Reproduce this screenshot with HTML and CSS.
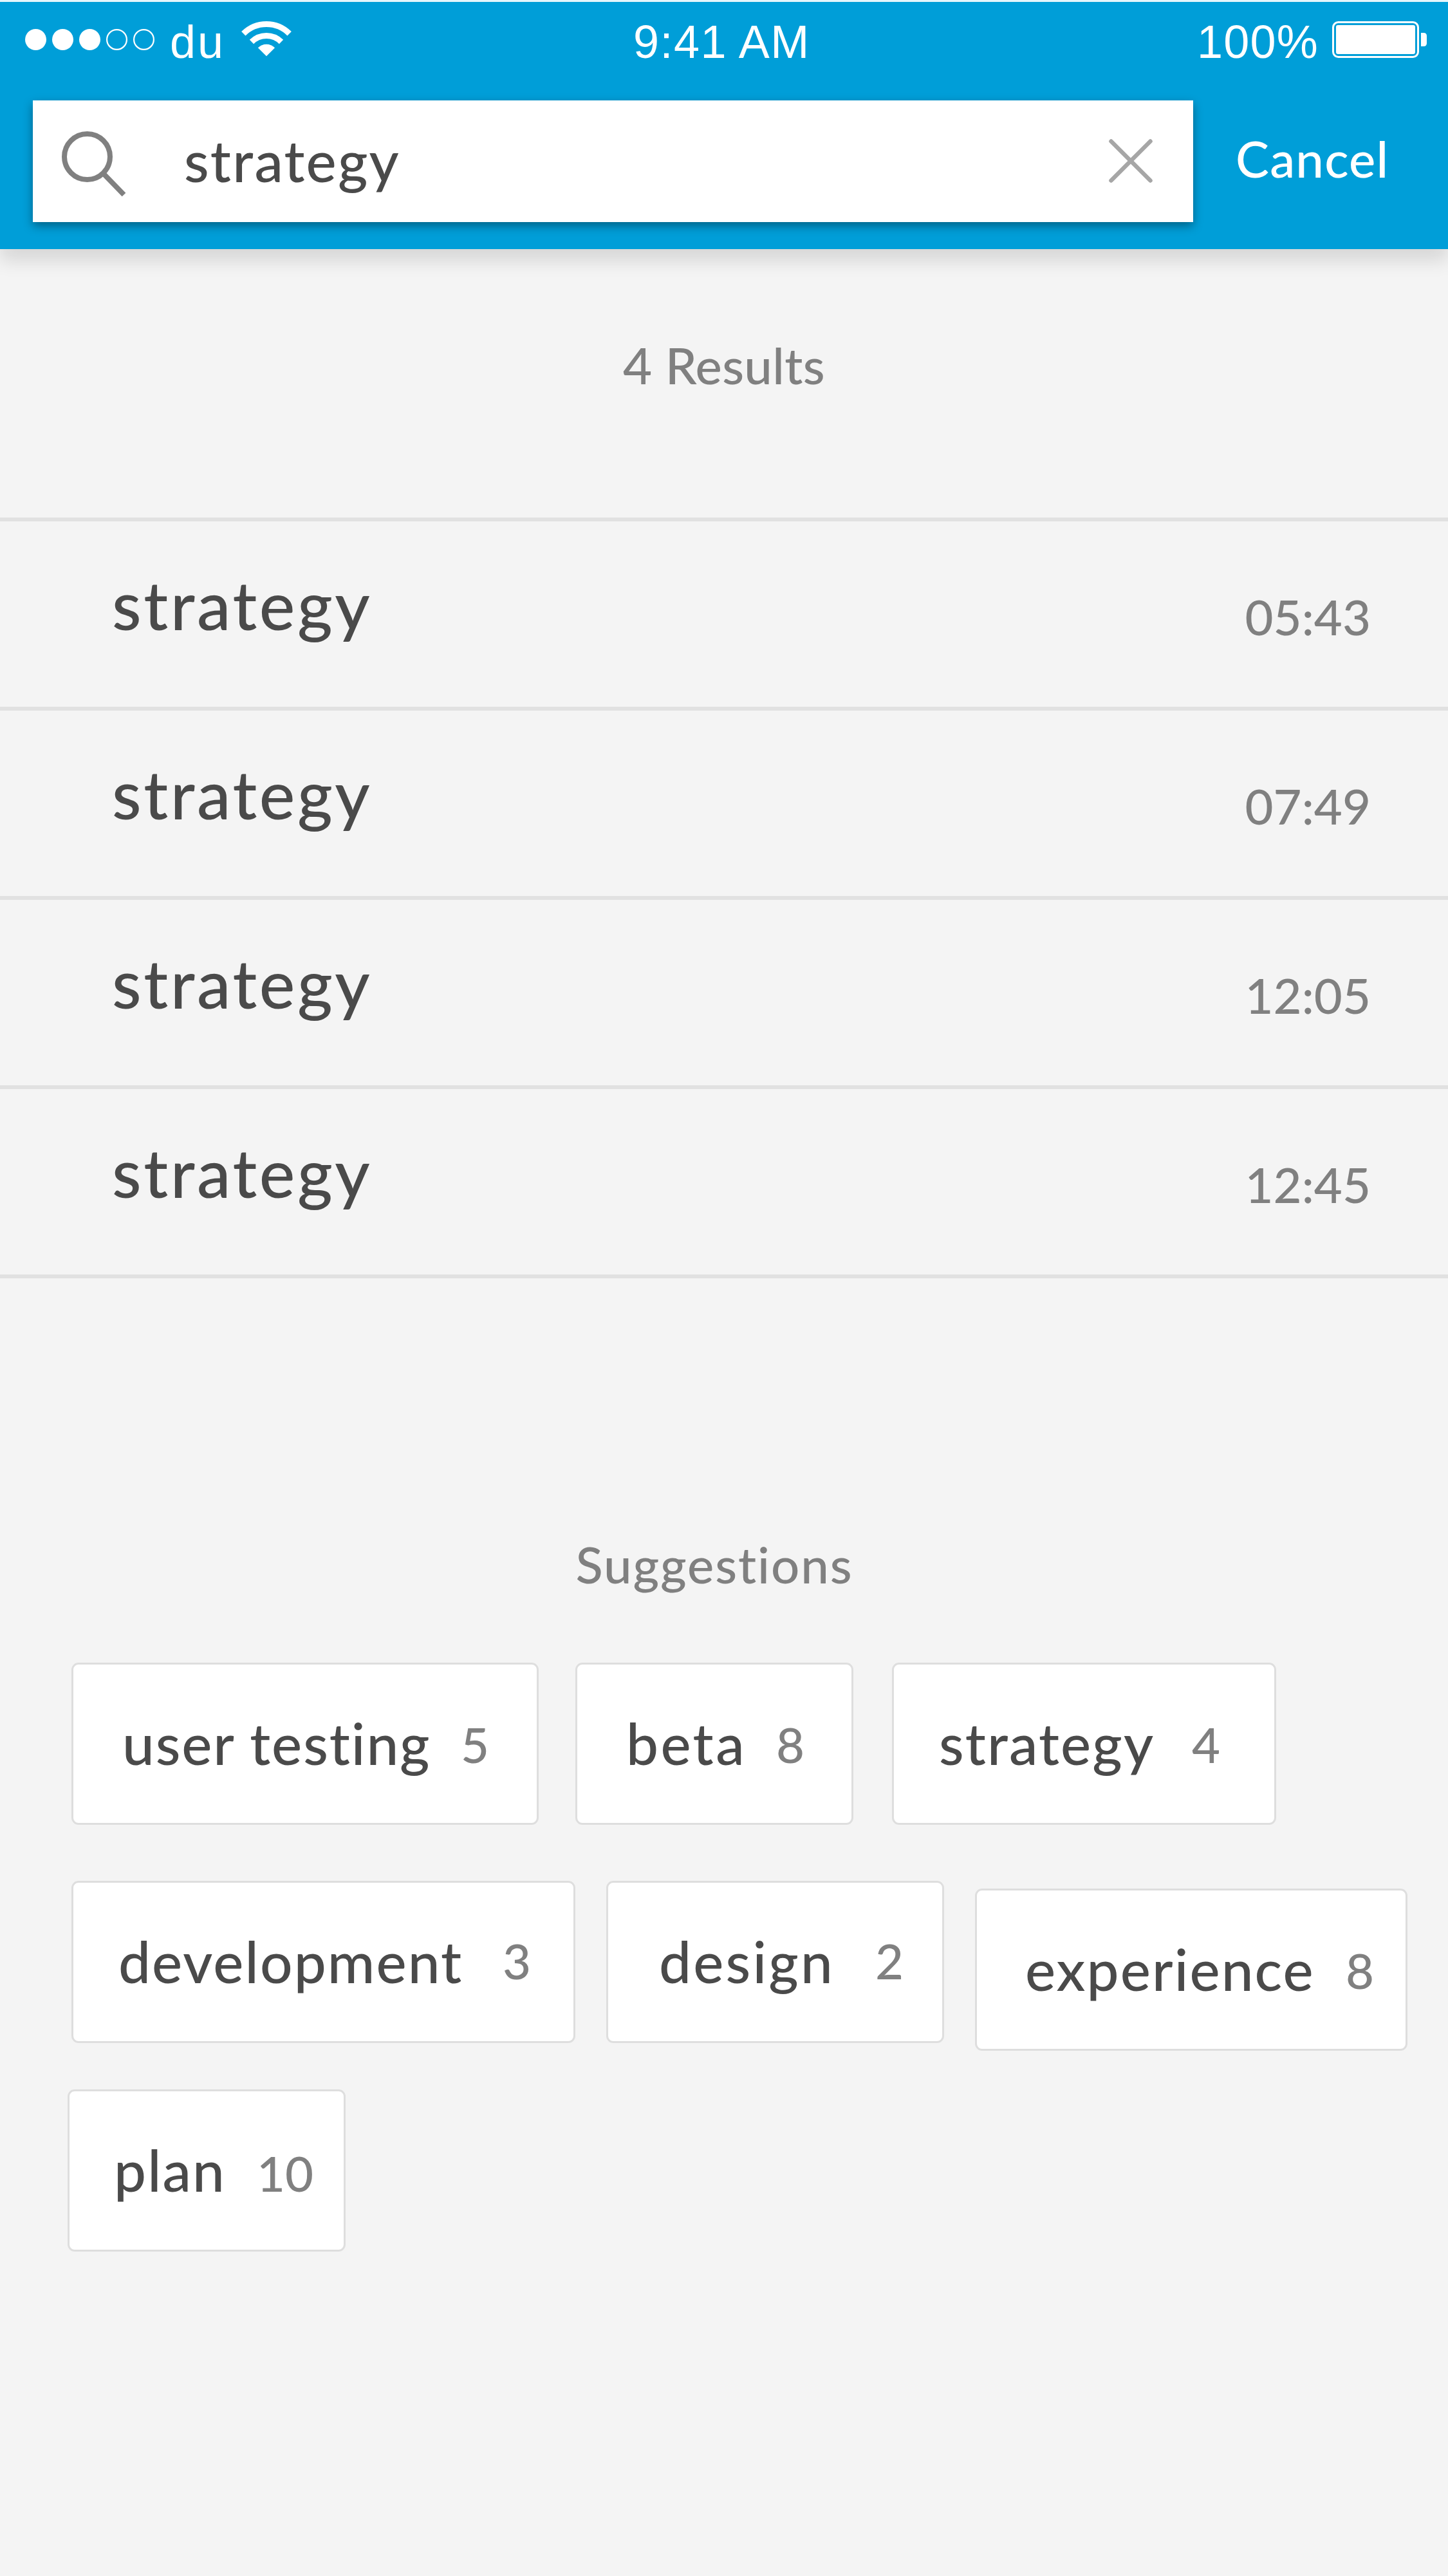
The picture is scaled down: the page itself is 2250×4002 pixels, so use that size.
FILE: index.html
```
<!DOCTYPE html>
<html lang="en">
<head>
<meta charset="utf-8">
<title>Search</title>
<link rel="stylesheet" href="styles.css">
</head>
<body>
<header class="header">
  <div class="status">
    <div class="status-left">
      <svg class="dots" width="201" height="33" viewBox="0 0 201 33">
        <g fill="#fff"><circle cx="16.5" cy="16.5" r="16.5"/><circle cx="58.5" cy="16.5" r="16.5"/><circle cx="100.5" cy="16.5" r="16.5"/></g>
        <g fill="none" stroke="#fff" stroke-width="2.2"><circle cx="142.5" cy="16.5" r="15.4"/><circle cx="184.5" cy="16.5" r="15.4"/></g>
      </svg>
      <span class="carrier">du</span>
      <svg class="wifi" width="78" height="55" viewBox="0 0 78 55" fill="none" stroke="#fff" stroke-width="9">
        <path d="M3.3 19.3A50.5 50.5 0 0 1 74.7 19.3"/>
        <path d="M16 32A32.5 32.5 0 0 1 62 32"/>
        <path d="M39 54.3L25.9 41.2A18.5 18.5 0 0 1 52.1 41.2Z" fill="#fff" stroke="none"/>
      </svg>
    </div>
    <span class="clock">9:41 AM</span>
    <div class="status-right">
      <span class="percent">100%</span>
      <svg class="battery" width="147" height="57" viewBox="0 0 147 57">
        <rect x="1.5" y="1.5" width="132" height="54" rx="8" fill="none" stroke="#fff" stroke-width="3"/>
        <rect x="6" y="6" width="123" height="45" rx="3" fill="#fff"/>
        <path d="M138 18h4q5 0 5 5v11q0 5-5 5h-4z" fill="#fff"/>
      </svg>
    </div>
  </div>
  <div class="search-row">
    <div class="search-box">
      <svg class="search-icon" width="102" height="104" viewBox="0 0 102 104" fill="none" stroke="#808080">
        <circle cx="39.5" cy="39.5" r="35.5" stroke-width="8"/>
        <path d="M65 66L96.5 98.5" stroke-width="8"/>
      </svg>
      <span class="query">strategy</span>
      <svg class="clear-icon" width="68" height="68" viewBox="0 0 68 68" stroke="#a6a6a6" stroke-width="6.5" stroke-linecap="round">
        <path d="M3.5 3.5L64.5 64.5M64.5 3.5L3.5 64.5"/>
      </svg>
    </div>
    <span class="cancel">Cancel</span>
  </div>
</header>
<main>
  <h1 class="results-title">4 Results</h1>
  <ul class="results">
    <li class="result"><span class="term">strategy</span><span class="time">05:43</span></li>
    <li class="result"><span class="term">strategy</span><span class="time">07:49</span></li>
    <li class="result"><span class="term">strategy</span><span class="time">12:05</span></li>
    <li class="result"><span class="term">strategy</span><span class="time">12:45</span></li>
  </ul>
  <h2 class="suggestions-title">Suggestions</h2>
  <div class="chips chips-first">
    <div class="chip user-testing"><span class="label">user testing</span><span class="count">5</span></div>
    <div class="chip beta"><span class="label">beta</span><span class="count">8</span></div>
    <div class="chip strategy"><span class="label">strategy</span><span class="count">4</span></div>
  </div>
  <div class="chips chips-second">
    <div class="chip development"><span class="label">development</span><span class="count">3</span></div>
    <div class="chip design"><span class="label">design</span><span class="count">2</span></div>
    <div class="chip experience"><span class="label">experience</span><span class="count">8</span></div>
  </div>
  <div class="chips chips-third">
    <div class="chip plan"><span class="label">plan</span><span class="count">10</span></div>
  </div>
</main>
</body>
</html>
```
FILE: styles.css
```
* {
  box-sizing: border-box;
}

body {
  margin: 0;
  min-height: 4002px;
  background: #f4f4f4;
  color: #4a4a4a;
  font-family: Lato, "Open Sans", sans-serif;
  font-weight: 500;
  white-space: nowrap;
}

svg {
  display: block;
  flex: none;
}

/* Header */
.header {
  height: 387px;
  border-top: 3px solid #e5f6fb;
  background: #009ed8;
  box-shadow: 0 18px 27px rgba(0, 0, 0, 0.12);
}

.status {
  display: grid;
  grid-template-columns: 984px 876px 1fr;
  height: 124px;
  color: #fff;
  font: 400 72px/124px "Liberation Sans", Arial, sans-serif;
}

.status-left,
.status-right {
  display: flex;
  align-items: flex-start;
}

.status-left {
  padding-left: 39px;
}

.dots {
  margin: 42px 24px 0 0;
}

.carrier {
  width: 111px;
  letter-spacing: 3px;
}

.wifi,
.battery {
  margin-top: 30px;
}

.clock {
  letter-spacing: 1.5px;
}

.percent {
  width: 210px;
  letter-spacing: 1.2px;
}

.search-row {
  display: flex;
  gap: 66px;
  padding: 29px 0 0 51px;
}

.search-box {
  display: flex;
  align-items: flex-start;
  width: 1803px;
  height: 189px;
  padding: 0 63px 0 45px;
  background: #fff;
  box-shadow: 0 6px 14px rgba(0, 0, 0, 0.38);
}

.search-icon {
  margin: 48px 88px 0 0;
}

.query {
  flex: 1;
  font-size: 89px;
  line-height: 185px;
  letter-spacing: 2.2px;
}

.clear-icon {
  margin-top: 60px;
}

.cancel {
  color: #fff;
  font-size: 78px;
  line-height: 181px;
  letter-spacing: 1.2px;
}

/* Results */
.results-title,
.suggestions-title {
  margin: 0;
  color: #808080;
  font-size: 78px;
  font-weight: 500;
  text-align: center;
}

.results-title {
  height: 417px;
  line-height: 361px;
  letter-spacing: 0.3px;
}

.results {
  margin: 0;
  padding: 0;
  list-style: none;
  border-bottom: 6px solid #e1e1e1;
}

.result {
  display: flex;
  justify-content: space-between;
  align-items: flex-start;
  height: 294px;
  padding: 0 120px 0 174px;
  border-top: 6px solid #e1e1e1;
}

.term {
  font-size: 105px;
  line-height: 256px;
  letter-spacing: 3.6px;
}

.time {
  margin-top: 9px;
  color: #808080;
  font-size: 76px;
  line-height: 277px;
}

/* Suggestions */
.suggestions-title {
  height: 597px;
  padding: 374px 30px 0 0;
  line-height: 141px;
  letter-spacing: 1.9px;
}

.chips {
  display: flex;
  align-items: flex-start;
  padding-left: 111px;
}

.chips-second {
  gap: 48px;
  margin-top: 87px;
}

.chips-third {
  margin-top: 60px;
  padding-left: 105px;
}

.chip {
  display: flex;
  align-items: flex-start;
  height: 252px;
  border: 3px solid #dedede;
  border-radius: 11px;
  background: #fff;
}

.label {
  flex: none;
  font-size: 89px;
  line-height: 244px;
  letter-spacing: 2.1px;
}

.count {
  color: #808080;
  font-size: 76px;
  line-height: 247px;
}

.user-testing {
  width: 726px;
  padding-left: 76px;
}

.user-testing .label {
  width: 526px;
  letter-spacing: 1.9px;
}

.beta {
  width: 432px;
  margin: 0 60px 0 57px;
  padding-left: 76px;
}

.beta .label {
  width: 233px;
  letter-spacing: 3.4px;
}

.strategy {
  width: 597px;
  padding-left: 70px;
}

.strategy .label {
  width: 393px;
}

.development {
  width: 783px;
  padding-left: 70px;
}

.development .label {
  width: 597px;
}

.development .count,
.design .count {
  line-height: 241px;
}

.design {
  width: 525px;
  padding-left: 79px;
}

.design .label {
  width: 336px;
  letter-spacing: 3.2px;
}

.experience {
  width: 672px;
  margin-top: 12px;
  padding-left: 75px;
}

.experience .label {
  width: 498px;
}

.plan {
  width: 432px;
  padding-left: 69px;
}

.plan .label {
  width: 222px;
}

.plan .count {
  line-height: 253px;
}
```
